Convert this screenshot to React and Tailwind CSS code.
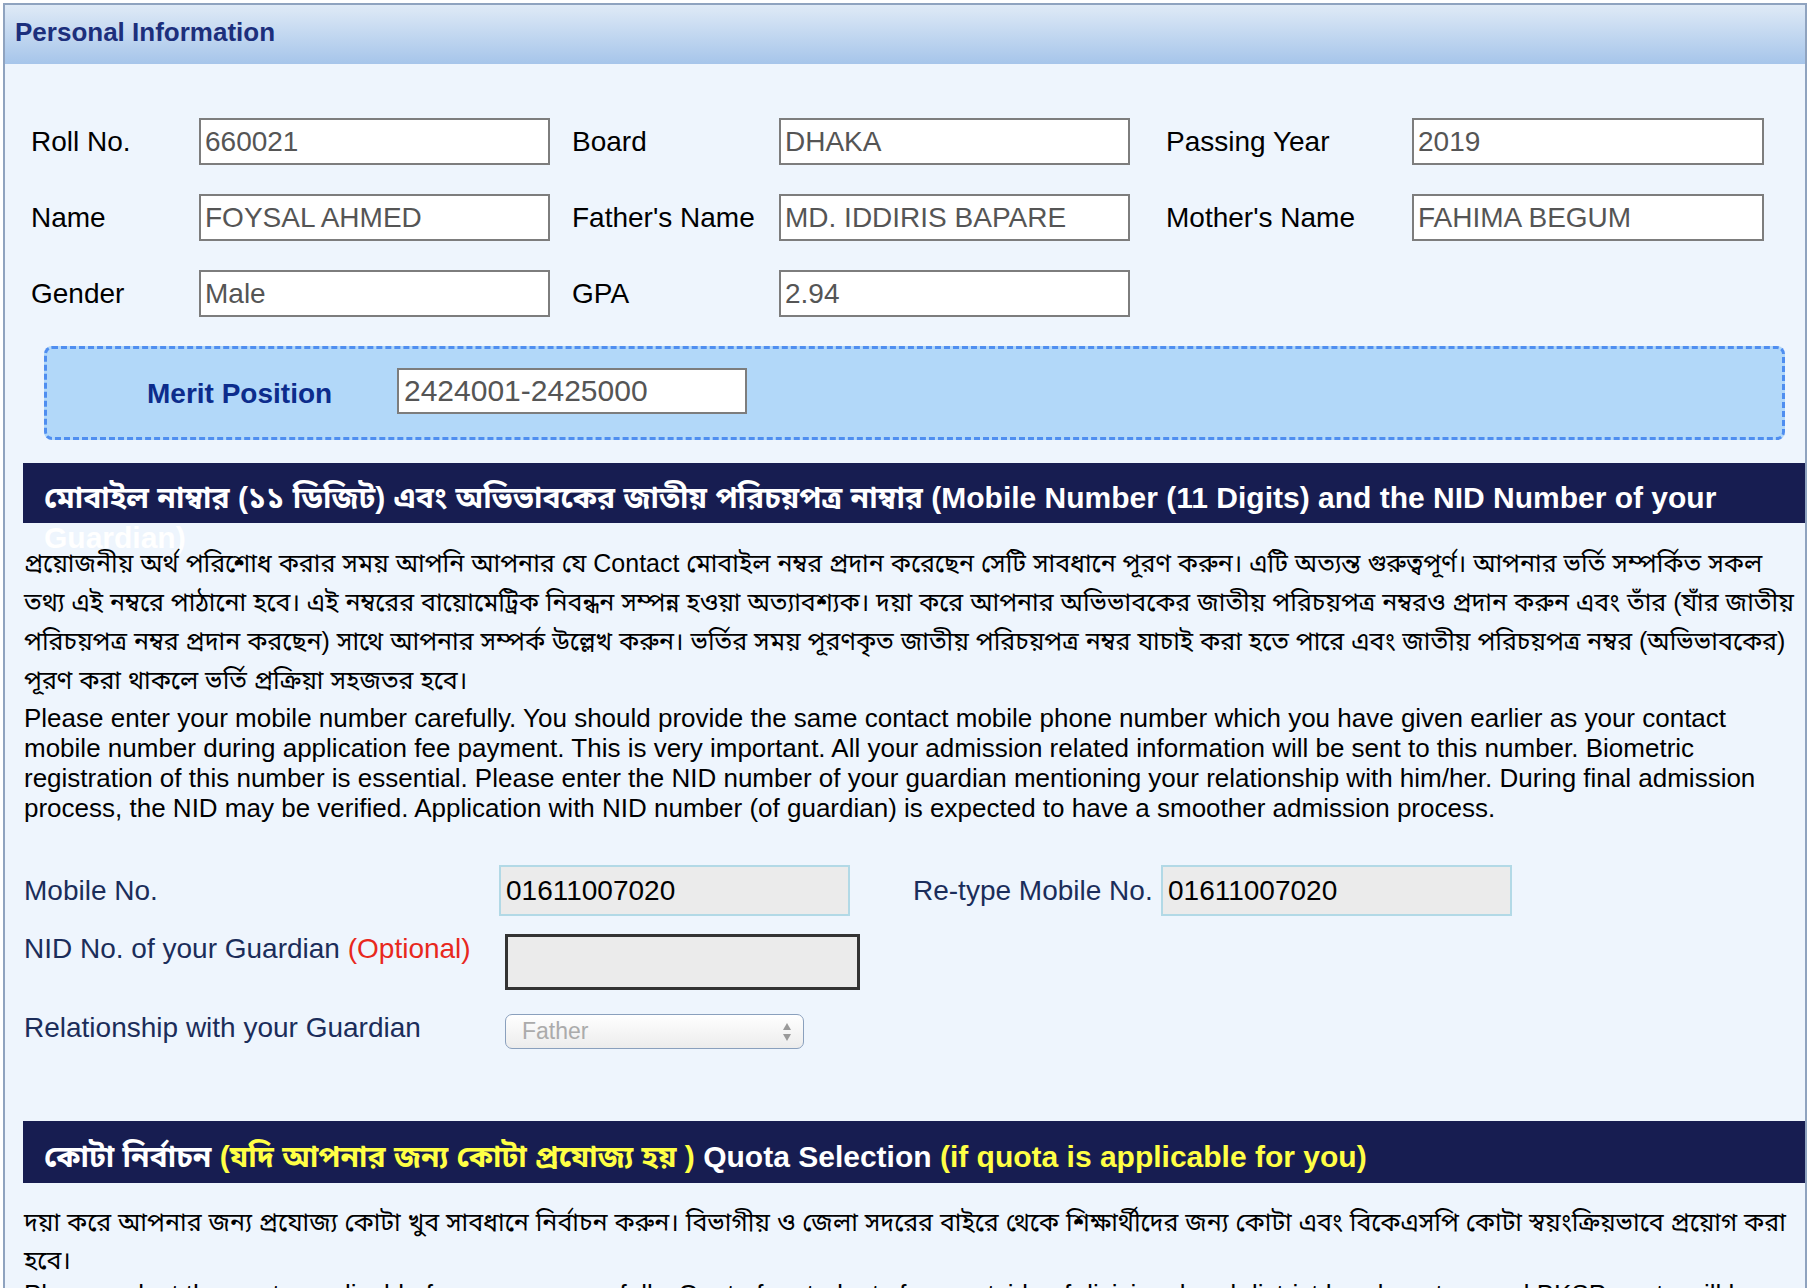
import React from "react";

const font = "font-['Liberation_Sans','Noto_Sans_Bengali','Noto_Sans',Arial,sans-serif]";

const fields = [
  [
    ["Roll No.", "660021"],
    ["Board", "DHAKA"],
    ["Passing Year", "2019"],
  ],
  [
    ["Name", "FOYSAL AHMED"],
    ["Father's Name", "MD. IDDIRIS BAPARE"],
    ["Mother's Name", "FAHIMA BEGUM"],
  ],
  [
    ["Gender", "Male"],
    ["GPA", "2.94"],
  ],
];

const ReadOnlyBox = ({ value }) => (
  <div className="h-[47px] border-2 border-[#7d7d7d] bg-white px-[4px] flex items-center text-[28px] text-[#555555] leading-none">
    {value}
  </div>
);

export default function App() {
  return (
    <div className={`h-[1288px] overflow-hidden bg-white ${font}`}>
      <div className="ml-[3px] mr-[8px] mt-[3px] border-2 border-[#8fa3bf] bg-[#eef5fd] min-h-[1400px]">
        {/* panel title */}
        <div className="h-[59px] bg-gradient-to-b from-[#dfeaf6] to-[#a6c5ea] pl-[10px] pt-[12px]">
          <span className="text-[26px] leading-[30px] font-bold text-[#1c2f7c]">Personal Information</span>
        </div>

        {/* basic info grid */}
        <div className="mt-[54px] pl-[26px] grid grid-cols-[168px_351px_229px_351px_282px_352px] gap-y-[29px] items-center">
          {fields.map((row, ri) =>
            row.map(([label, value], ci) => (
              <React.Fragment key={`${ri}-${ci}`}>
                <div
                  className={`text-[28px] text-black ${
                    ci === 1 ? "pl-[22px]" : ci === 2 ? "pl-[36px]" : ""
                  }`}
                >
                  {label}
                </div>
                <ReadOnlyBox value={value} />
              </React.Fragment>
            ))
          )}
        </div>

        {/* merit position */}
        <div className="mt-[29px] ml-[39px] mr-[20px] h-[94px] rounded-[8px] border-[3px] border-dashed border-[#4f8ef0] bg-[#b2d8f9] flex items-start pt-[19px]">
          <div className="w-[350px] pl-[100px] pt-[5px] text-[28px] font-bold text-[#0c2c8c]">Merit Position</div>
          <div className="w-[350px] h-[46px] border-2 border-[#7d7d7d] bg-white px-[5px] flex items-center text-[30px] text-[#555555] leading-none">
            2424001-2425000
          </div>
        </div>

        {/* mobile heading */}
        <div className="mt-[23px] ml-[18px] h-[60px] bg-[#171d51] pl-[21px] pr-[60px] pt-[15px]">
          <div className="text-[30px] font-bold text-white leading-[40px]">
            মোবাইল নাম্বার (১১ ডিজিট) এবং অভিভাবকের জাতীয় পরিচয়পত্র নাম্বার (Mobile Number (11 Digits) and the NID Number of your Guardian)
          </div>
        </div>

        <div className="pl-[19px] pr-[10px] mt-[21px] whitespace-nowrap">
          <p className="text-[25px] leading-[39px] text-black">
            প্রয়োজনীয় অর্থ পরিশোধ করার সময় আপনি আপনার যে Contact মোবাইল নম্বর প্রদান করেছেন সেটি সাবধানে পূরণ করুন। এটি অত্যন্ত গুরুত্বপূর্ণ। আপনার ভর্তি সম্পর্কিত সকল
            <br />
            তথ্য এই নম্বরে পাঠানো হবে। এই নম্বরের বায়োমেট্রিক নিবন্ধন সম্পন্ন হওয়া অত্যাবশ্যক। দয়া করে আপনার অভিভাবকের জাতীয় পরিচয়পত্র নম্বরও প্রদান করুন এবং তাঁর (যাঁর জাতীয়
            <br />
            পরিচয়পত্র নম্বর প্রদান করছেন) সাথে আপনার সম্পর্ক উল্লেখ করুন। ভর্তির সময় পূরণকৃত জাতীয় পরিচয়পত্র নম্বর যাচাই করা হতে পারে এবং জাতীয় পরিচয়পত্র নম্বর (অভিভাবকের)
            <br />
            পূরণ করা থাকলে ভর্তি প্রক্রিয়া সহজতর হবে।
          </p>
          <p className="mt-[3px] text-[26px] leading-[30px] text-black">
            Please enter your mobile number carefully. You should provide the same contact mobile phone number which you have given earlier as your contact
            <br />
            mobile number during application fee payment. This is very important. All your admission related information will be sent to this number. Biometric
            <br />
            registration of this number is essential. Please enter the NID number of your guardian mentioning your relationship with him/her. During final admission
            <br />
            process, the NID may be verified. Application with NID number (of guardian) is expected to have a smoother admission process.
          </p>

          {/* mobile fields */}
          <div className="mt-[42px] flex items-center">
            <div className="w-[475px] text-[28px] text-[#1b2d5a]">Mobile No.</div>
            <div className="w-[351px] h-[51px] border-2 border-[#b2d9e6] bg-[#ebebeb] px-[5px] flex items-center text-[28px] text-black">
              01611007020
            </div>
            <div className="ml-[63px] w-[248px] text-[28px] text-[#1b2d5a]">Re-type Mobile No.</div>
            <div className="w-[351px] h-[51px] border-2 border-[#b2d9e6] bg-[#ebebeb] px-[5px] flex items-center text-[28px] text-black">
              01611007020
            </div>
          </div>

          <div className="mt-[18px] flex items-start">
            <div className="w-[481px] text-[28px] leading-[28px] pt-[1px] text-[#1b2d5a]">
              NID No. of your Guardian <span className="text-[#e8281d]">(Optional)</span>
            </div>
            <div className="w-[355px] h-[56px] border-[3px] border-[#333333] bg-[#ebebeb]"></div>
          </div>

          <div className="mt-[24px] flex items-start">
            <div className="w-[481px] text-[28px] leading-[28px] text-[#1b2d5a]">Relationship with your Guardian</div>
            <div className="relative w-[299px] h-[35px] rounded-[7px] border-[1.5px] border-[#8aa0bd] bg-gradient-to-b from-white to-[#ececec] pl-[16px] flex items-center text-[23px] text-[#ababab]">
              Father
              <svg className="absolute right-[11px] top-[7px]" width="10" height="20" viewBox="0 0 10 20">
                <path d="M5 1 L9 8 L1 8 Z" fill="#9a9a9a" />
                <path d="M5 19 L9 12 L1 12 Z" fill="#9a9a9a" />
              </svg>
            </div>
          </div>
        </div>

        {/* quota heading */}
        <div className="mt-[72px] ml-[18px] h-[62px] bg-[#171d51] pl-[21px] pt-[16px]">
          <div className="text-[30px] font-bold text-white leading-[40px]">
            কোটা নির্বাচন <span className="text-[#ffff45]">(যদি আপনার জন্য কোটা প্রযোজ্য হয় )</span> Quota Selection{" "}
            <span className="text-[#ffff45]">(if quota is applicable for you)</span>
          </div>
        </div>

        <div className="pl-[19px] pr-[10px] mt-[20px] whitespace-nowrap">
          <p className="text-[25px] leading-[38px] text-black">
            দয়া করে আপনার জন্য প্রযোজ্য কোটা খুব সাবধানে নির্বাচন করুন। বিভাগীয় ও জেলা সদরের বাইরে থেকে শিক্ষার্থীদের জন্য কোটা এবং বিকেএসপি কোটা স্বয়ংক্রিয়ভাবে প্রয়োগ করা
            <br />
            হবে।
          </p>
          <p className="text-[26px] leading-[30px] text-black">
            Please select the quota applicable for you very carefully. Quota for students from outside of divisional and district headquarters and BKSP quota will be
          </p>
        </div>
      </div>
    </div>
  );
}
